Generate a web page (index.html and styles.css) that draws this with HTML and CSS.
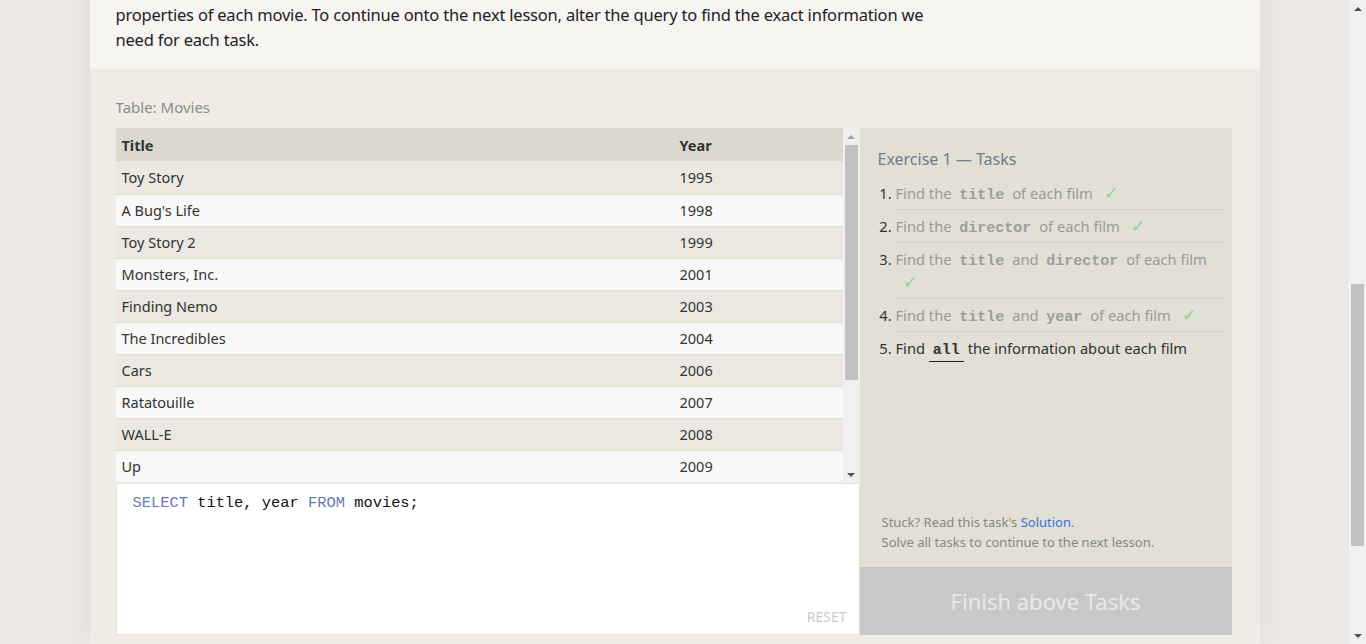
FILE: index.html
```html
<!DOCTYPE html>
<html lang="en">
<head>
<meta charset="utf-8">
<title>SQL Lesson 1: SELECT queries 101</title>
<link rel="stylesheet" href="styles.css">
</head>
<body>
<div class="viewport">
  <div class="page">
    <section class="intro">
      <p>involve the Movies table, and the default query below currently shows all the<br>properties of each movie. To continue onto the next lesson, alter the query to find the exact information we<br>need for each task.</p>
    </section>
    <section class="exercise">
      <div class="table-label">Table: Movies</div>
      <div class="workspace">
        <div class="left">
          <div class="table-wrap">
            <table class="movies">
              <thead>
                <tr><th class="c-title">Title</th><th class="c-year">Year</th></tr>
              </thead>
              <tbody>
                <tr><td>Toy Story</td><td>1995</td></tr>
                <tr><td>A Bug's Life</td><td>1998</td></tr>
                <tr><td>Toy Story 2</td><td>1999</td></tr>
                <tr><td>Monsters, Inc.</td><td>2001</td></tr>
                <tr><td>Finding Nemo</td><td>2003</td></tr>
                <tr><td>The Incredibles</td><td>2004</td></tr>
                <tr><td>Cars</td><td>2006</td></tr>
                <tr><td>Ratatouille</td><td>2007</td></tr>
                <tr><td>WALL-E</td><td>2008</td></tr>
                <tr><td>Up</td><td>2009</td></tr>
              </tbody>
            </table>
            <div class="vscroll">
              <div class="arrow arrow-up"></div>
              <div class="track"><div class="thumb"></div></div>
              <div class="arrow arrow-down"></div>
            </div>
          </div>
          <div class="editor">
            <div class="code"><span class="kw">SELECT</span> title, year <span class="kw">FROM</span> movies;</div>
            <div class="reset">RESET</div>
          </div>
        </div>
        <div class="right">
          <div class="tasks">
            <h3 class="tasks-title">Exercise 1 — Tasks</h3>
            <ol class="task-list">
              <li class="done"><span class="t">Find the <code>title</code> of each film</span> <span class="check">✓</span></li>
              <li class="done"><span class="t">Find the <code>director</code> of each film</span> <span class="check">✓</span></li>
              <li class="done"><span class="t">Find the <code>title</code> and <code>director</code> of each film</span> <span class="check">✓</span></li>
              <li class="done"><span class="t">Find the <code>title</code> and <code>year</code> of each film</span> <span class="check">✓</span></li>
              <li class="current"><span class="t">Find <code>all</code> the information about each film</span></li>
            </ol>
          </div>
          <div class="help">
            <div>Stuck? Read this task's <a href="#">Solution</a>.</div>
            <div>Solve all tasks to continue to the next lesson.</div>
          </div>
          <div class="finish">Finish above Tasks</div>
        </div>
      </div>
    </section>
  </div>
</div>
<div class="page-scroll">
  <div class="arrow arrow-up"></div>
  <div class="ptrack"><div class="pthumb"></div></div>
  <div class="arrow arrow-down"></div>
</div>
</body>
</html>
```

FILE: styles.css
```css
html, body {
  margin: 0;
  padding: 0;
  height: 644px;
  overflow: hidden;
}

body {
  display: flex;
  background: #ece8e5;
  font-family: "Noto Sans", "Open Sans", sans-serif;
  color: #333;
}

.viewport {
  flex: 1;
  display: flex;
  justify-content: center;
  overflow: hidden;
}

.page {
  width: 1170px;
  margin-top: -23px;
  box-shadow: 0 0 30px rgba(80, 60, 50, 0.07);
  display: flex;
  flex-direction: column;
}

.intro {
  background: #f6f5f2;
  padding: 0 26px 17px;
}

.intro p {
  margin: 0;
  font-size: 16.5px;
  line-height: 25px;
  color: #222;
  letter-spacing: -0.2px;
}

.exercise {
  background: #efece5;
  padding: 28px 28px 0 26px;
  flex: 1;
}

.table-label {
  font-size: 15px;
  line-height: 20px;
  color: #8a8a8a;
  margin-bottom: 11px;
}

.workspace {
  display: flex;
}

.left {
  width: 744px;
  display: flex;
  flex-direction: column;
}

.table-wrap {
  display: flex;
  height: 355px;
  overflow: hidden;
}

.movies {
  width: 727px;
  border-collapse: collapse;
  font-size: 14.5px;
  color: #333;
  align-self: flex-start;
}

.movies th {
  background: #dbd9ce;
  text-align: left;
  font-weight: 700;
  height: 33px;
  padding: 0 6px;
  box-sizing: border-box;
  color: #333;
}

.movies .c-year {
  width: 169px;
}

.movies td {
  height: 32px;
  padding: 0 6px;
  box-sizing: border-box;
  border-top: 1px solid #e0ded6;
}

.movies tbody tr:first-child td {
  height: 33px;
  border-top: none;
}

.movies tbody tr:nth-child(odd) td {
  background: #eae8e1;
}

.movies tbody tr:nth-child(even) td {
  background: #f8f8f8;
}

.vscroll {
  width: 17px;
  background: #f0f0f0;
  display: flex;
  flex-direction: column;
}

.arrow {
  height: 17px;
  display: flex;
  align-items: center;
  justify-content: center;
}

.arrow::before {
  content: "";
  width: 0;
  height: 0;
  border-left: 4px solid transparent;
  border-right: 4px solid transparent;
}

.arrow-up::before {
  border-bottom: 4px solid #a3a3a3;
}

.arrow-down::before {
  border-top: 4px solid #505050;
}

.track {
  flex: 1;
  padding: 0 2px;
}

.thumb {
  height: 235px;
  background: #c1c1c1;
}

.editor {
  height: 152px;
  background: #fff;
  border: 1px solid #e6e3dc;
  box-sizing: border-box;
  display: flex;
  flex-direction: column;
  padding: 9px 12px 8px 16px;
}

.code {
  flex: 1;
  font-family: "Liberation Mono", "DejaVu Sans Mono", monospace;
  font-size: 15.4px;
  line-height: 20px;
  color: #111;
}

.code .kw {
  color: #6a78b4;
}

.reset {
  align-self: flex-end;
  font-size: 14px;
  color: #cbcbcb;
  line-height: 18px;
}

.right {
  width: 372px;
  background: #e2dfd4;
  display: flex;
  flex-direction: column;
}

.tasks {
  flex: 1;
  padding: 20px 8px 0 18px;
}

.tasks-title {
  margin: 0 0 7px;
  font-size: 16px;
  font-weight: 400;
  line-height: 22px;
  color: #737c8c;
}

.task-list {
  margin: 0;
  padding: 0 0 0 18px;
  font-size: 14.7px;
  color: #333;
}

.task-list li {
  line-height: 23px;
  padding: 5px 0 4px;
  border-bottom: 1px solid #d6d3c8;
}

.task-list li:last-child {
  border-bottom: none;
}

.task-list li.done .t {
  color: #9b9b9b;
}

.task-list code {
  font-family: "Liberation Mono", "DejaVu Sans Mono", monospace;
  font-weight: 700;
  font-size: 15px;
  line-height: 1;
  padding: 0 4px;
}

.task-list li.done code {
  color: #9d9d9d;
}

.task-list li.current code {
  color: #333;
  border-bottom: 1px solid #222;
  padding-bottom: 2px;
}

.check {
  color: #8fd19a;
  margin-left: 7px;
  font-size: 17px;
  line-height: 1;
}

.help {
  padding: 0 12px 15px 22px;
  font-size: 13px;
  line-height: 20px;
  color: #888;
}

.help a {
  color: #3b71d8;
  text-decoration: none;
}

.finish {
  height: 68px;
  background: #c8c8c8;
  color: #e8e8e8;
  font-size: 22px;
  display: flex;
  align-items: center;
  justify-content: center;
}

.page-scroll {
  width: 17px;
  background: #f1f1f1;
  display: flex;
  flex-direction: column;
}

.page-scroll .arrow-up::before {
  border-bottom-color: #505050;
}

.ptrack {
  flex: 1;
  padding: 267px 2px 0;
}

.pthumb {
  height: 262px;
  background: #c1c1c1;
}
```
